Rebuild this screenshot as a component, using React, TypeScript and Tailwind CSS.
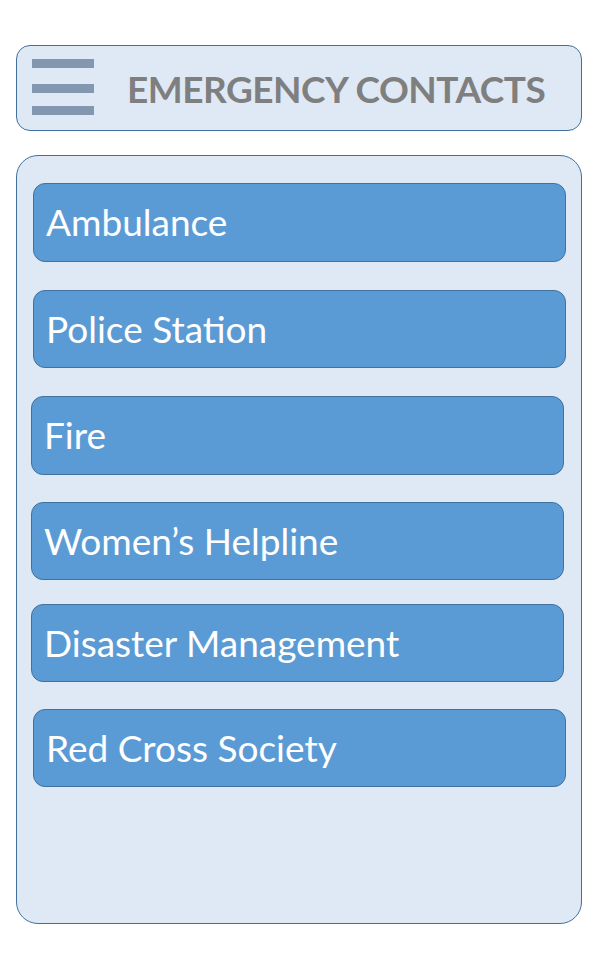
import React from "react";

const contacts = [
  { label: "Ambulance", cls: "mt-0 ml-[16px] h-[79px]" },
  { label: "Police Station", cls: "mt-[28px] ml-[16px] h-[78px]" },
  { label: "Fire", cls: "mt-[28px] ml-[14px] h-[79px]" },
  { label: "Women’s Helpline", cls: "mt-[27px] ml-[14px] h-[78px]" },
  { label: "Disaster Management", cls: "mt-[24px] ml-[14px] h-[78px]" },
  { label: "Red Cross Society", cls: "mt-[27px] ml-[16px] h-[78px]" },
];

export default function App() {
  return (
    <div
      className="w-[600px] h-[960px] bg-white pt-[45px] pl-[16px]"
      style={{ fontFamily: "Lato, 'Open Sans', sans-serif" }}
    >
      {/* Header bar */}
      <div className="w-[566px] h-[86px] rounded-[14px] border border-[#41719c] bg-[#dee9f5] flex items-center">
        <div className="ml-[15px] self-start mt-[13px] flex flex-col">
          <div className="w-[62px] h-[9px] bg-[#8497b0]" />
          <div className="mt-[16px] w-[62px] h-[9px] bg-[#8497b0]" />
          <div className="mt-[13px] w-[62px] h-[9px] bg-[#8497b0]" />
        </div>
        <h1 className="ml-[33px] text-[37px] font-bold text-[#7f7f7f] tracking-[-0.5px] leading-none">
          EMERGENCY CONTACTS
        </h1>
      </div>

      {/* Contact list */}
      <div className="mt-[24px] w-[566px] h-[769px] rounded-[22px] border border-[#41719c] bg-[#dee9f5] pt-[27px]">
        {contacts.map((c) => (
          <div
            key={c.label}
            className={`${c.cls} w-[533px] rounded-[12px] border border-[#41719c] bg-[#5b9bd5] flex items-center pl-[12px]`}
          >
            <span className="text-white text-[37px] leading-none pb-[2px]">
              {c.label}
            </span>
          </div>
        ))}
      </div>
    </div>
  );
}
